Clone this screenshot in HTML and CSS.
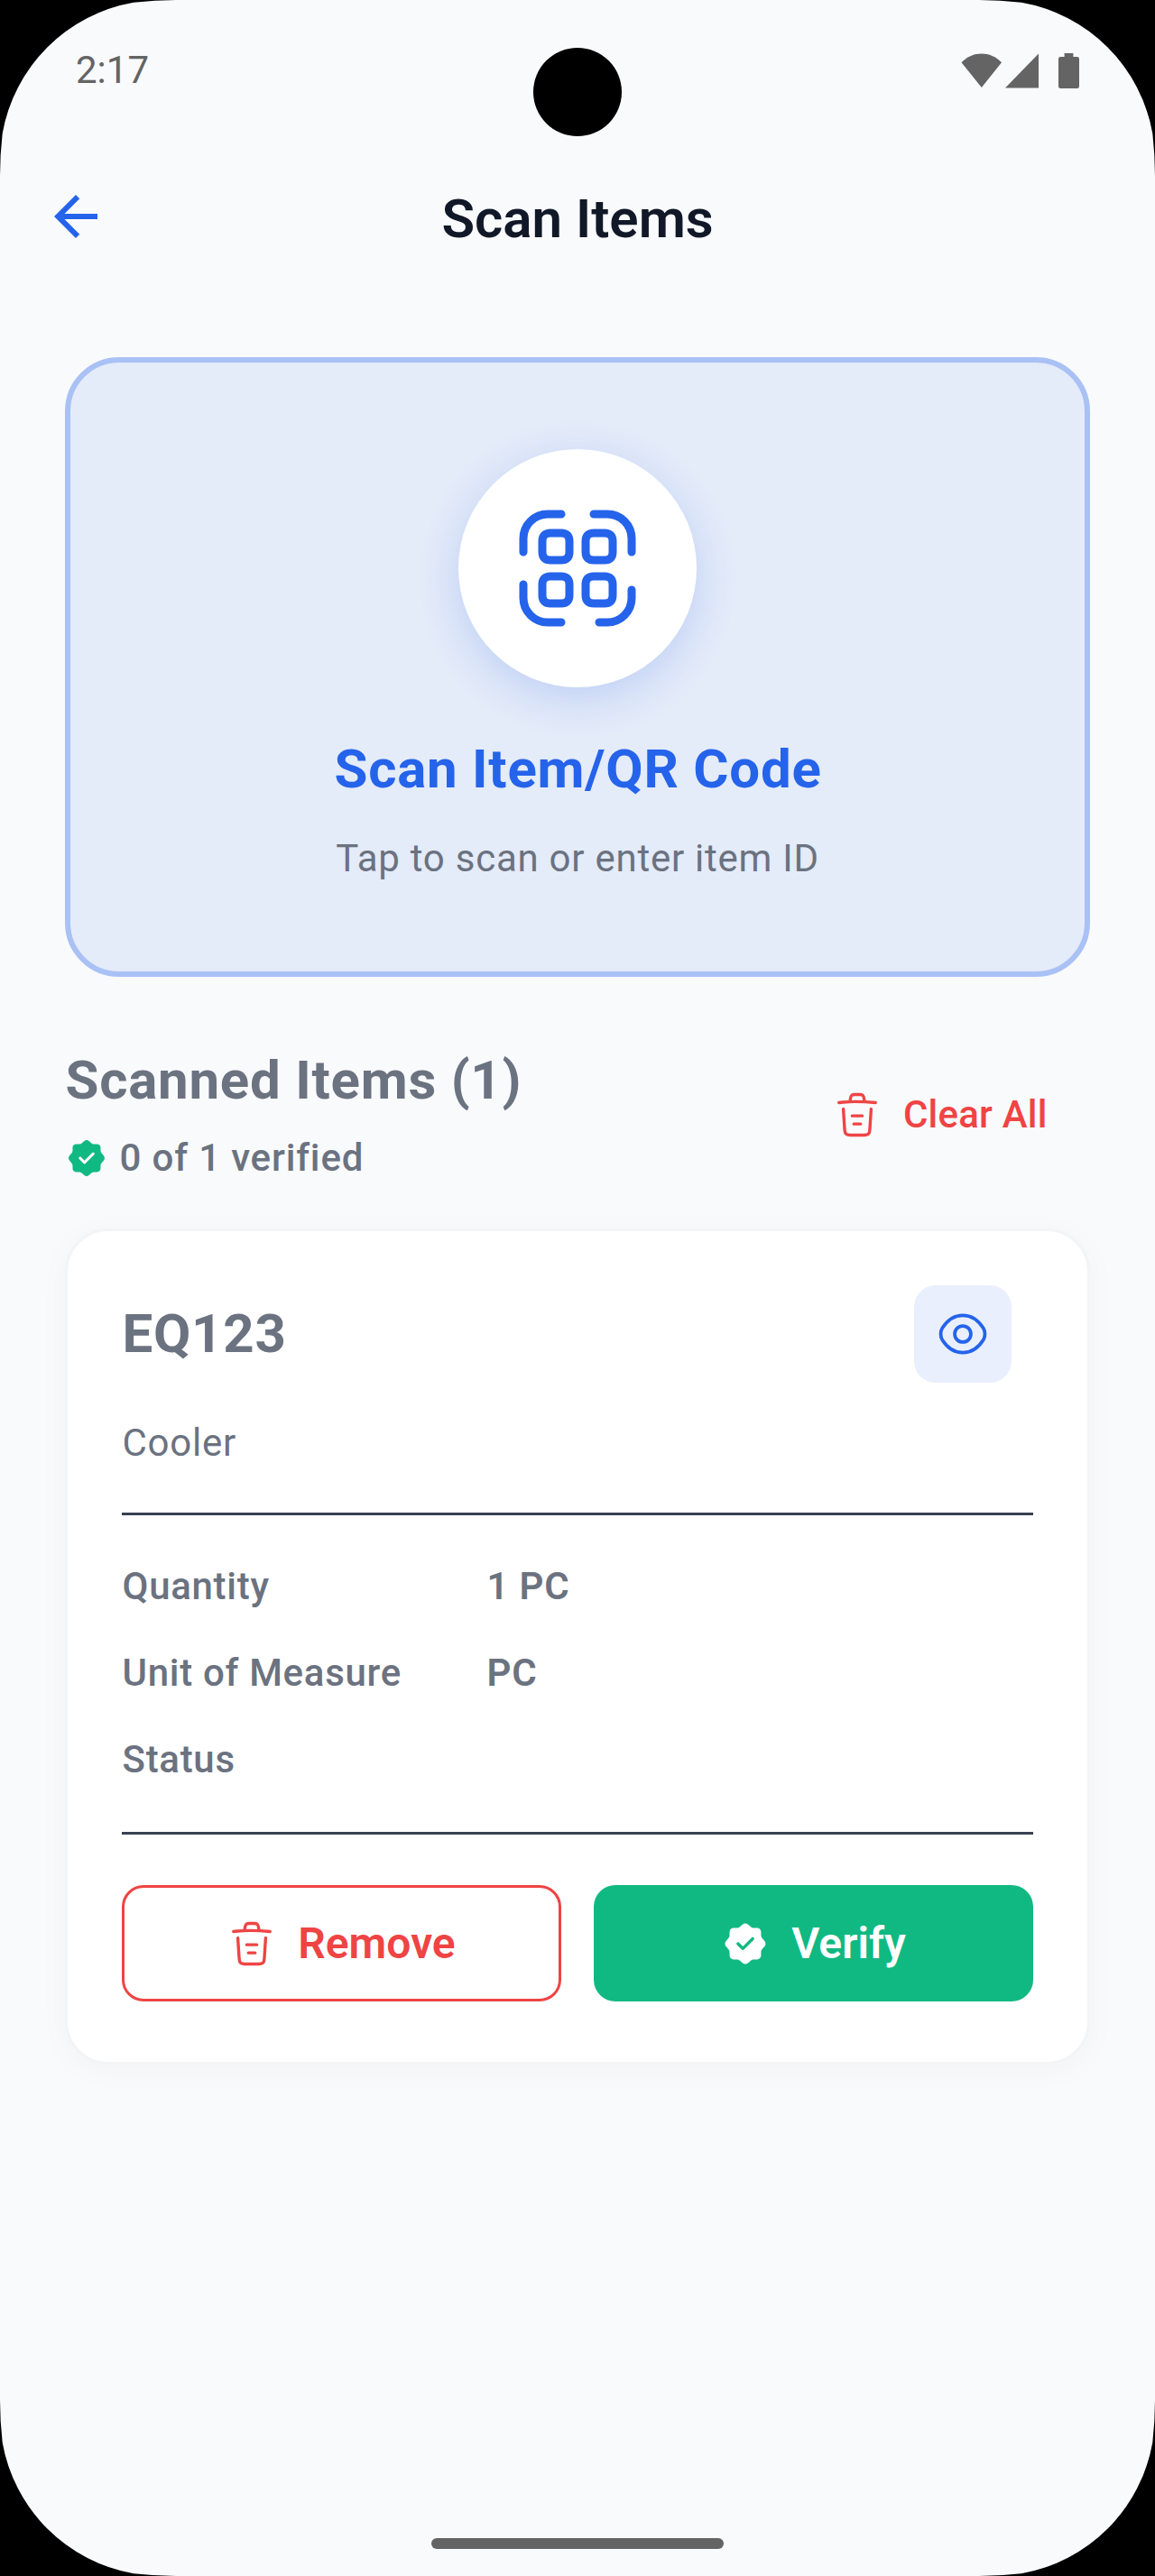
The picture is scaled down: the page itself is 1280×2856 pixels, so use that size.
FILE: index.html
```html
<!DOCTYPE html>
<html lang="en">
<head>
<meta charset="utf-8">
<title>Scan Items</title>
<link rel="stylesheet" href="styles.css">
</head>
<body>
<svg class="defs" aria-hidden="true">
  <symbol id="trash" viewBox="0 0 24 24">
    <g fill="none" stroke="currentColor" stroke-width="1.5" stroke-linecap="round" stroke-linejoin="round">
      <path d="M21 5.98c-3.33-.33-6.68-.5-10.02-.5-1.98 0-3.96.1-5.94.3L3 5.98"/>
      <path d="M8.5 4.97l.22-1.31C8.88 2.71 9 2 10.69 2h2.62c1.69 0 1.82.75 1.97 1.67l.22 1.3"/>
      <path d="M18.85 9.14l-.65 10.07C18.09 20.78 18 22 15.21 22H8.79C6 22 5.91 20.78 5.8 19.21L5.15 9.14"/>
      <path d="M10.33 16.5h3.33M9.5 12.5h5"/>
    </g>
  </symbol>
  <symbol id="verified" viewBox="0 0 24 24">
    <path fill="currentColor" d="M21.56 10.74l-1.36-1.58c-.25-.3-.46-.86-.46-1.26V6.2c0-1.06-.87-1.93-1.93-1.93h-1.7c-.4 0-.97-.2-1.27-.45l-1.58-1.36c-.69-.59-1.82-.59-2.51 0L9.16 3.82c-.3.25-.87.45-1.27.45H6.16c-1.06 0-1.93.87-1.93 1.93v1.71c0 .39-.2.95-.45 1.25l-1.35 1.59c-.58.69-.58 1.81 0 2.5l1.35 1.59c.25.29.45.86.45 1.25v1.71c0 1.06.87 1.93 1.93 1.93h1.73c.4 0 .97.2 1.27.45l1.58 1.36c.69.59 1.82.59 2.51 0l1.58-1.36c.3-.25.86-.45 1.27-.45h1.7c1.06 0 1.93-.87 1.93-1.93v-1.7c0-.4.2-.97.45-1.27l1.36-1.58c.58-.69.58-1.83-.01-2.52zm-5.4-.63l-4.83 4.83a.75.75 0 0 1-1.06 0l-2.42-2.42a.754.754 0 0 1 0-1.06c.29-.29.77-.29 1.06 0l1.89 1.89 4.3-4.3c.29-.29.77-.29 1.06 0 .29.29.29.77 0 1.06z"/>
  </symbol>
  <symbol id="corner" viewBox="0 0 205 205">
    <path d="M0 0H195Q172 0 148 2.700A179 179 0 0 0 2.700 148Q0 172 0 195z"/>
  </symbol>
</svg>

<div class="screen">
  <div class="status-bar">
    <span class="clock">2:17</span>
    <svg class="status-icons" width="136" height="42" viewBox="0 0 136 42" fill="#646464">
      <path d="M2.5 12.2C15-.7 34.500-.7 47 12.200L24.800 40z"/>
      <path d="M88 2.500V40.500H51z"/>
      <path d="M116.600 2h9.800v4h4.400q2.200 0 2.200 2.200v30.600q0 2.200-2.200 2.200h-18.600q-2.200 0-2.200-2.200V8.200q0-2.200 2.200-2.200h4.400z"/>
    </svg>
  </div>

  <header class="app-bar">
    <svg class="back" viewBox="0 0 24 24"><path fill="currentColor" d="M20 11H7.830l5.590-5.590L12 4l-8 8 8 8 1.410-1.410L7.830 13H20z"/></svg>
    <h1 class="title">Scan Items</h1>
  </header>

  <main class="content">
    <section class="scan-card">
      <div class="scan-circle">
        <svg class="scan-icon" viewBox="0 0 24 24" fill="none" stroke="currentColor" stroke-width="1.5" stroke-linecap="round" stroke-linejoin="round">
          <path d="M2 9V6.500C2 4.010 4.010 2 6.500 2H9M15 2h2.500C19.990 2 22 4.010 22 6.500V9M22 16v1.500c0 2.490-2.010 4.500-4.500 4.500H16M9 22H6.500C4.010 22 2 19.990 2 17.500V15"/>
          <path d="M10.500 7v2c0 1-.5 1.500-1.500 1.500H7c-1 0-1.500-.5-1.500-1.500V7c0-1 .5-1.500 1.500-1.500h2c1 0 1.500.5 1.500 1.500z"/>
          <path d="M18.500 7v2c0 1-.5 1.500-1.500 1.500h-2c-1 0-1.500-.5-1.500-1.500V7c0-1 .5-1.500 1.500-1.500h2c1 0 1.500.5 1.500 1.500z"/>
          <path d="M10.500 15v2c0 1-.5 1.500-1.500 1.500H7c-1 0-1.500-.5-1.500-1.500v-2c0-1 .5-1.500 1.500-1.500h2c1 0 1.500.5 1.500 1.500z"/>
          <path d="M18.500 15v2c0 1-.5 1.500-1.500 1.500h-2c-1 0-1.500-.5-1.500-1.500v-2c0-1 .5-1.500 1.500-1.500h2c1 0 1.500.5 1.500 1.500z"/>
        </svg>
      </div>
      <h2 class="scan-title">Scan Item/QR Code</h2>
      <p class="scan-hint">Tap to scan or enter item ID</p>
    </section>

    <section class="list-head">
      <div>
        <h2 class="list-title">Scanned Items (1)</h2>
        <div class="verified-row">
          <svg class="verified-icon"><use href="#verified"/></svg>
          <span>0 of 1 verified</span>
        </div>
      </div>
      <div class="clear-all">
        <svg class="icon"><use href="#trash"/></svg>
        <span>Clear All</span>
      </div>
    </section>

    <article class="item">
      <div class="item-head">
        <h3 class="item-id">EQ123</h3>
        <div class="view">
          <svg class="view-icon" viewBox="0 0 24 24" fill="none" stroke="currentColor" stroke-width="1.5">
            <path d="M15.580 12c0 1.980-1.600 3.580-3.580 3.580S8.420 13.980 8.420 12s1.600-3.580 3.580-3.580 3.580 1.600 3.580 3.580z"/>
            <path d="M12 20.270c3.530 0 6.820-2.080 9.110-5.680.9-1.410.9-3.780 0-5.190-2.290-3.600-5.580-5.680-9.110-5.680-3.530 0-6.820 2.080-9.110 5.680-.9 1.410-.9 3.780 0 5.190 2.290 3.600 5.580 5.680 9.110 5.680z"/>
          </svg>
        </div>
      </div>
      <p class="item-name">Cooler</p>
      <dl class="details">
        <dt>Quantity</dt><dd>1 PC</dd>
        <dt>Unit of Measure</dt><dd>PC</dd>
        <dt>Status</dt><dd></dd>
      </dl>
      <div class="actions">
        <div class="btn btn-remove"><svg class="icon"><use href="#trash"/></svg><span>Remove</span></div>
        <div class="btn btn-verify"><svg class="icon"><use href="#verified"/></svg><span>Verify</span></div>
      </div>
    </article>
  </main>

  <div class="home-bar"></div>

  <div class="camera"></div>
  <svg class="corner top-left"><use href="#corner"/></svg>
  <svg class="corner top-right"><use href="#corner"/></svg>
  <svg class="corner bottom-left"><use href="#corner"/></svg>
  <svg class="corner bottom-right"><use href="#corner"/></svg>
</div>
</body>
</html>
```
FILE: styles.css
```css
* { box-sizing: border-box; margin: 0; padding: 0; }

body {
  width: 1280px;
  background: #000;
  color: #6b7280;
  font: 400 42px/50px Roboto, sans-serif;
}

svg { display: block; flex: none; }
h1, h2, h3 { font-size: 60px; line-height: 72px; font-weight: 700; white-space: nowrap; }

.defs { position: absolute; width: 0; height: 0; }

.screen {
  position: relative;
  display: flex;
  flex-direction: column;
  width: 1280px;
  height: 2856px;
  background: #f9fafc;
  overflow: hidden;
}

/* System chrome */
.status-bar {
  display: flex;
  justify-content: space-between;
  align-items: center;
  height: 156px;
  padding: 0 81px 0 84px;
  color: #646464;
}
.clock { line-height: 50px; }

.home-bar {
  width: 324px;
  height: 12px;
  margin: auto auto 30px;
  border-radius: 6px;
  background: #646464;
}

.camera {
  position: absolute;
  top: 53px;
  left: 591px;
  width: 98px;
  height: 98px;
  border-radius: 50%;
  background: #000;
}

.corner { position: absolute; width: 205px; height: 205px; }
.top-left { top: 0; left: 0; }
.top-right { top: 0; right: 0; transform: scaleX(-1); }
.bottom-left { bottom: 0; left: 0; transform: scaleY(-1); }
.bottom-right { bottom: 0; right: 0; transform: scale(-1); }

/* App bar */
.app-bar {
  display: grid;
  grid-template-columns: 72px 1fr 72px;
  align-items: center;
  height: 168px;
  padding: 0 48px;
}
.back { width: 72px; height: 72px; color: #2563eb; }
.title {
  padding-top: 5px;
  text-align: center;
  font-weight: 600;
  color: #111827;
}

.content { padding: 72px 72px 0; }

/* Scan call to action */
.scan-card {
  display: flex;
  flex-direction: column;
  align-items: center;
  height: 687px;
  padding-top: 96px;
  border: 6px solid #a9c1f5;
  border-radius: 60px;
  background: #e4ebf9;
}
.scan-circle {
  display: flex;
  align-items: center;
  justify-content: center;
  width: 264px;
  height: 264px;
  border-radius: 50%;
  background: #fff;
  color: #2563eb;
  box-shadow: 0 12px 46px rgba(37, 99, 235, 0.2);
}
.scan-icon { width: 144px; height: 144px; }
.scan-title {
  margin-top: 55px;
  padding-left: 1px;
  color: #2563eb;
  letter-spacing: 0.75px;
}
.scan-hint { margin-top: 38px; letter-spacing: 0.75px; }

/* List header */
.list-head {
  display: flex;
  align-items: center;
  justify-content: space-between;
  margin-top: 79px;
}
.list-title { padding-left: 0.5px; letter-spacing: 0.75px; }
.verified-row {
  display: flex;
  align-items: center;
  gap: 12.5px;
  margin-top: 25px;
  font-weight: 500;
  letter-spacing: 0.85px;
}
.verified-icon { width: 48px; height: 48px; color: #10b981; }
.icon { width: 54px; height: 54px; }
.clear-all {
  display: flex;
  align-items: center;
  gap: 24px;
  width: 285px;
  color: #ef4444;
  font-weight: 500;
  letter-spacing: 0.2px;
}

/* Scanned item */
.item {
  height: 927px;
  margin-top: 53px;
  padding: 60px;
  border: 3px solid #f3f4f6;
  border-radius: 48px;
  background: #fff;
  box-shadow: 0 6px 36px rgba(0, 0, 0, 0.03);
}
.item-head {
  display: flex;
  align-items: center;
  justify-content: space-between;
  padding-right: 24px;
}
.item-id { padding-left: 0.5px; letter-spacing: 0.75px; }
.view {
  display: flex;
  align-items: center;
  justify-content: center;
  width: 108px;
  height: 108px;
  border-radius: 24px;
  background: #e9effd;
  color: #2563eb;
}
.view-icon { width: 60px; height: 60px; }
.item-name { margin-top: 42px; padding-left: 0.5px; letter-spacing: 0.75px; }

.details {
  display: grid;
  grid-template-columns: 404px 1fr;
  row-gap: 46px;
  margin-top: 52px;
  padding: 54px 0 55px 0.5px;
  border-top: 3px solid #374151;
  border-bottom: 3px solid #374151;
  font-weight: 500;
  letter-spacing: 0.7px;
}
.details dd { font-weight: 600; letter-spacing: 0.8px; }

.actions {
  display: grid;
  grid-template-columns: 1fr 1fr;
  gap: 36px;
  margin-top: 56px;
}
.btn {
  display: flex;
  align-items: center;
  justify-content: center;
  gap: 24px;
  height: 129px;
  border-radius: 24px;
  font-size: 48px;
  font-weight: 600;
}
.btn-remove { border: 3px solid #ef4444; color: #ef4444; }
.btn-verify { background: #10b981; color: #fff; }
```
